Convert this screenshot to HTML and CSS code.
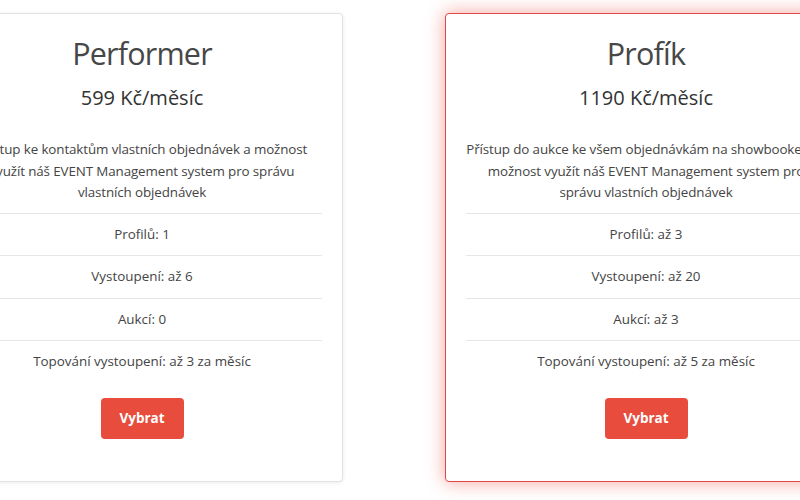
FILE: index.html
```html
<!DOCTYPE html>
<html lang="cs">
<head>
<meta charset="utf-8">
<title>Tarify</title>
<link rel="stylesheet" href="styles.css">
</head>
<body>
<div class="plans">
  <div class="card">
    <h2 class="card-title">Performer</h2>
    <h5 class="card-price">599 Kč/měsíc</h5>
    <p class="card-desc">Přístup ke kontaktům vlastních objednávek a možnost<br>využít náš EVENT Management system pro správu<br>vlastních objednávek</p>
    <ul class="features">
      <li>Profilů: 1</li>
      <li>Vystoupení: až 6</li>
      <li>Aukcí: 0</li>
      <li>Topování vystoupení: až 3 za měsíc</li>
    </ul>
    <button class="btn">Vybrat</button>
  </div>
  <div class="card card-featured">
    <h2 class="card-title">Profík</h2>
    <h5 class="card-price">1190 Kč/měsíc</h5>
    <p class="card-desc">Přístup do aukce ke všem objednávkám na showbookeru a<br>možnost využít náš EVENT Management system pro<br>správu vlastních objednávek</p>
    <ul class="features">
      <li>Profilů: až 3</li>
      <li>Vystoupení: až 20</li>
      <li>Aukcí: až 3</li>
      <li>Topování vystoupení: až 5 za měsíc</li>
    </ul>
    <button class="btn">Vybrat</button>
  </div>
</div>
</body>
</html>
```
FILE: styles.css
```css
html, body {
  margin: 0;
  padding: 0;
  background: #fff;
}
body {
  font-family: "Open Sans", "Liberation Sans", sans-serif;
  color: #444;
  overflow: hidden;
}
.plans {
  display: flex;
  gap: 102px;
  margin-left: -59px;
  padding: 13px 0 30px;
  width: 1000px;
}
.card {
  box-sizing: border-box;
  width: 402px;
  flex: 0 0 402px;
  height: 469px;
  border: 1px solid #e2e2e2;
  border-radius: 4px;
  box-shadow: 0 1px 4px rgba(0, 0, 0, 0.08);
  padding: 20px 20px 0;
  display: flex;
  flex-direction: column;
  align-items: center;
  text-align: center;
  background: #fff;
}
.card-featured {
  border-color: #e0474a;
  box-shadow: 0 0 18px 1px rgba(231, 76, 60, 0.45);
}
.card-title {
  margin: 0;
  font-size: 30.5px;
  font-weight: 400;
  letter-spacing: -0.8px;
  line-height: 38px;
  color: #474747;
}
.card-price {
  margin: 14px 0 0;
  font-size: 20px;
  font-weight: 400;
  line-height: 24px;
  color: #333;
}
.card-desc {
  margin: 29px -10px 9px;
  font-size: 13.4px;
  letter-spacing: -0.12px;
  line-height: 21.5px;
  color: #444;
}
.features {
  list-style: none;
  margin: 0;
  padding: 0;
  align-self: stretch;
}
.features li {
  border-top: 1px solid #e6e6e6;
  padding: 10px 0;
  font-size: 13.4px;
  line-height: 21.5px;
  color: #444;
}
.btn {
  margin-top: 15px;
  width: 83px;
  height: 41px;
  border: none;
  border-radius: 4px;
  background: #e74c3c;
  color: #fff;
  font-family: "Open Sans", "Liberation Sans", sans-serif;
  font-weight: 700;
  font-size: 13.5px;
  line-height: 21px;
  padding: 0;
}
```
